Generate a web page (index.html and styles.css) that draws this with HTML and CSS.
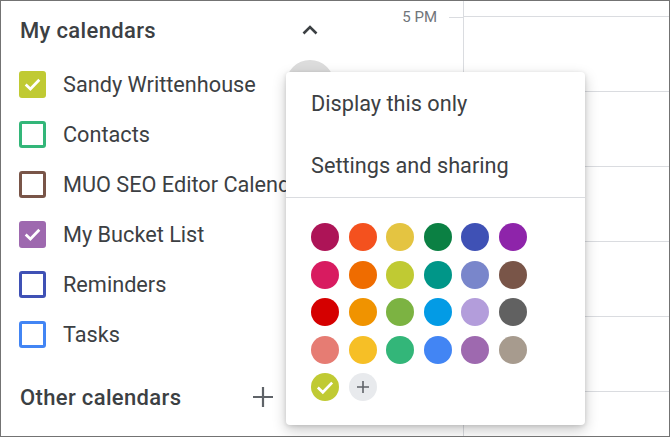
FILE: index.html
```html
<!DOCTYPE html>
<html>
<head>
<meta charset="utf-8">
<link rel="stylesheet" href="styles.css">
</head>
<body>
<div class="frame">
  <aside class="sidebar">
    <div class="section-head">
      <span class="section-title">My calendars</span>
      <svg class="chev" width="24" height="24" viewBox="0 0 24 24"><path d="M5.5 15.5 L12 9 L18.5 15.5" fill="none" stroke="#3c4043" stroke-width="2.6"/></svg>
    </div>
    <div class="cal-row">
      <span class="box filled" style="--c:#c0ca33"><svg width="22" height="22" viewBox="0 0 20 20"><path d="M3.5 10.5 L8 14.8 L16.5 6" fill="none" stroke="#fff" stroke-width="2.6"/></svg></span>
      <span class="cal-name">Sandy Writtenhouse</span>
      <span class="more"></span>
    </div>
    <div class="cal-row">
      <span class="box" style="--c:#33b679"></span>
      <span class="cal-name">Contacts</span>
    </div>
    <div class="cal-row">
      <span class="box" style="--c:#795548"></span>
      <span class="cal-name">MUO SEO Editor Calendar</span>
    </div>
    <div class="cal-row">
      <span class="box filled" style="--c:#9e69af"><svg width="22" height="22" viewBox="0 0 20 20"><path d="M3.5 10.5 L8 14.8 L16.5 6" fill="none" stroke="#fff" stroke-width="2.6"/></svg></span>
      <span class="cal-name">My Bucket List</span>
    </div>
    <div class="cal-row">
      <span class="box" style="--c:#3f51b5"></span>
      <span class="cal-name">Reminders</span>
    </div>
    <div class="cal-row">
      <span class="box" style="--c:#4285f4"></span>
      <span class="cal-name">Tasks</span>
    </div>
    <div class="section-head other">
      <span class="section-title">Other calendars</span>
      <svg class="plus" width="24" height="24" viewBox="0 0 24 24"><path d="M12 2 V22 M2 12 H22" fill="none" stroke="#5f6368" stroke-width="2.2"/></svg>
    </div>
  </aside>
  <div class="gutter">
    <div class="hour"><span class="hour-label">5 PM</span><span class="tick"></span></div>
  </div>
  <div class="grid">
    <div class="slot"></div>
    <div class="slot"></div>
    <div class="slot"></div>
    <div class="slot"></div>
    <div class="slot"></div>
    <div class="slot"></div>
  </div>

  <div class="menu">
    <div class="menu-item">Display this only</div>
    <div class="menu-item">Settings and sharing</div>
    <div class="divider"></div>
    <div class="palette">
      <span class="dot" style="background:#ad1457"></span>
      <span class="dot" style="background:#f4511e"></span>
      <span class="dot" style="background:#e4c441"></span>
      <span class="dot" style="background:#0b8043"></span>
      <span class="dot" style="background:#3f51b5"></span>
      <span class="dot" style="background:#8e24aa"></span>
      <span class="dot" style="background:#d81b60"></span>
      <span class="dot" style="background:#ef6c00"></span>
      <span class="dot" style="background:#c0ca33"></span>
      <span class="dot" style="background:#009688"></span>
      <span class="dot" style="background:#7986cb"></span>
      <span class="dot" style="background:#795548"></span>
      <span class="dot" style="background:#d50000"></span>
      <span class="dot" style="background:#f09300"></span>
      <span class="dot" style="background:#7cb342"></span>
      <span class="dot" style="background:#039be5"></span>
      <span class="dot" style="background:#b39ddb"></span>
      <span class="dot" style="background:#616161"></span>
      <span class="dot" style="background:#e67c73"></span>
      <span class="dot" style="background:#f6bf26"></span>
      <span class="dot" style="background:#33b679"></span>
      <span class="dot" style="background:#4285f4"></span>
      <span class="dot" style="background:#9e69af"></span>
      <span class="dot" style="background:#a79b8e"></span>
      <span class="dot" style="background:#c0ca33"><svg width="22" height="22" viewBox="0 0 20 20"><path d="M3.5 10.5 L8 14.8 L16.5 6" fill="none" stroke="#fff" stroke-width="2.4"/></svg></span>
      <span class="dot add"><svg width="16" height="16" viewBox="0 0 16 16"><path d="M8 2 V14 M2 8 H14" fill="none" stroke="#5f6368" stroke-width="1.6"/></svg></span>
    </div>
  </div>
</div>
</body>
</html>
```
FILE: styles.css
```css
html, body {
  margin: 0;
  padding: 0;
  background: #fff;
}
body {
  width: 670px;
  height: 437px;
  overflow: hidden;
  font-family: Roboto, "Liberation Sans", sans-serif;
  color: #3c4043;
}
.frame {
  box-sizing: border-box;
  width: 670px;
  height: 437px;
  border: 1px solid #737373;
  display: flex;
  position: relative;
  overflow: hidden;
  background: #fff;
}
.sidebar {
  width: 345px;
  flex: none;
  display: flex;
  flex-direction: column;
}
.section-head {
  height: 58px;
  display: flex;
  align-items: center;
  padding-left: 19px;
  padding-right: 19px;
}
.section-head.other {
  margin-top: 13px;
  height: 50px;
  padding-right: 71px;
}
.section-title {
  flex: 1;
  font-size: 22px;
  font-weight: 500;
  letter-spacing: 0.35px;
}
.chev {
  margin-right: 5px;
}
.cal-row {
  height: 50px;
  display: flex;
  align-items: center;
  padding-left: 18px;
  white-space: nowrap;
}
.box {
  box-sizing: border-box;
  width: 27px;
  height: 27px;
  border: 3px solid var(--c);
  border-radius: 3px;
  flex: none;
  display: flex;
  align-items: center;
  justify-content: center;
}
.box.filled {
  background: var(--c);
}
.cal-name {
  margin-left: 17px;
  font-size: 21.7px;
  flex: 1;
}
.more {
  width: 48px;
  height: 48px;
  border-radius: 50%;
  background: #dcdcdc;
  flex: none;
  margin-right: 12px;
}
.gutter {
  width: 117px;
  flex: none;
}
.hour {
  height: 32px;
  display: flex;
  align-items: center;
  justify-content: flex-end;
}
.hour-label {
  font-size: 15px;
  color: #70757a;
  margin-right: 12px;
}
.tick {
  width: 14px;
  border-top: 1px solid #dadce0;
}
.grid {
  flex: 1;
  border-left: 1px solid #dadce0;
  padding-top: 15px;
}
.slot {
  height: 75px;
  box-sizing: border-box;
  border-top: 1px solid #dadce0;
}
.menu {
  position: absolute;
  left: 285px;
  top: 71px;
  width: 299px;
  height: 353px;
  background: #fff;
  border-radius: 4px;
  box-shadow: 0 5px 14px rgba(0,0,0,0.22), 0 1px 4px rgba(0,0,0,0.12);
}
.menu-item {
  height: 62px;
  display: flex;
  align-items: center;
  padding-left: 25px;
  font-size: 21.7px;
}
.divider {
  height: 1px;
  background: #dadce0;
  margin-top: 1px;
}
.palette {
  display: grid;
  grid-template-columns: repeat(6, 28px);
  grid-auto-rows: 28px;
  column-gap: 9.5px;
  row-gap: 9.5px;
  padding: 25px 0 0 25px;
}
.dot {
  width: 28px;
  height: 28px;
  border-radius: 50%;
  display: flex;
  align-items: center;
  justify-content: center;
}
.dot.add {
  background: #e8eaed;
}
```
